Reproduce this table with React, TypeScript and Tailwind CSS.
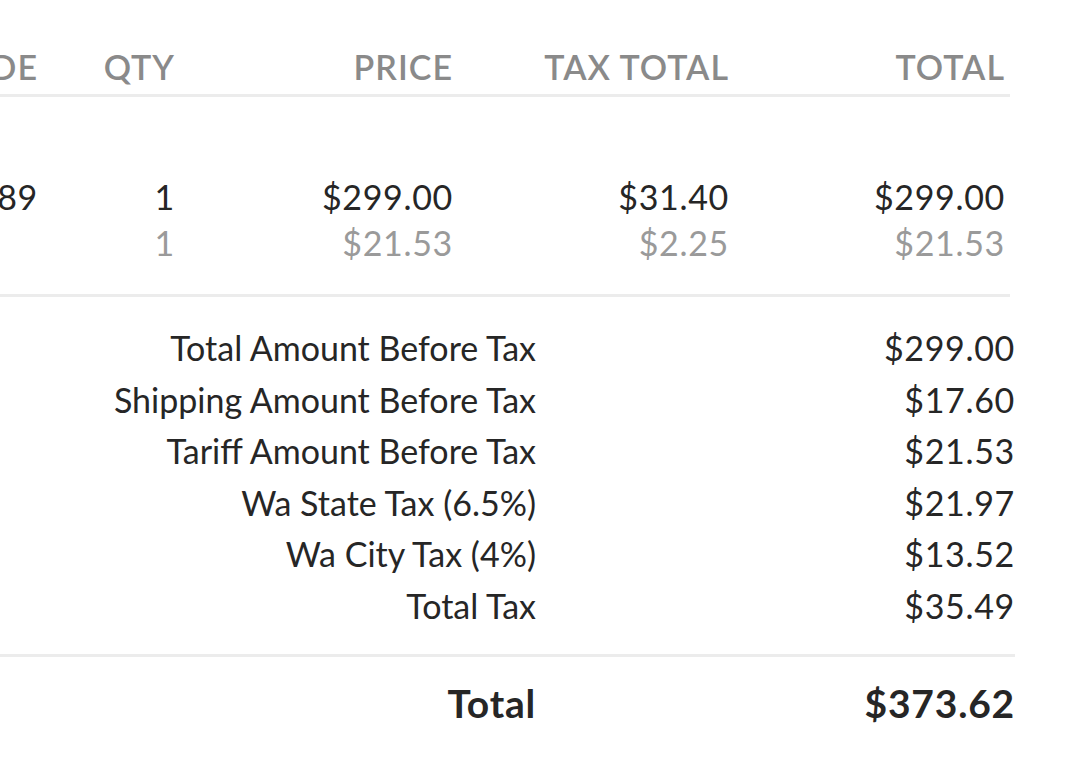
const lines = [
  { label: "Total Amount Before Tax", value: "$299.00" },
  { label: "Shipping Amount Before Tax", value: "$17.60" },
  { label: "Tariff Amount Before Tax", value: "$21.53" },
  { label: "Wa State Tax (6.5%)", value: "$21.97" },
  { label: "Wa City Tax (4%)", value: "$13.52" },
  { label: "Total Tax", value: "$35.49" },
];

const Clip = ({ text }: { text: string }) => (
  <div className="w-[38px] overflow-hidden flex justify-end">
    <span className="whitespace-nowrap">{text}</span>
  </div>
);

const App = () => {
  return (
    <div
      className="w-[1079px] h-[775px] bg-white overflow-hidden text-[34px] text-[#262626]"
      style={{ fontFamily: "Lato, 'Open Sans', sans-serif" }}
    >
      <div className="w-[1010px]">
        {/* header */}
        <div className="h-[94px] flex items-end pb-[7px] font-semibold text-[#8a8a8a] leading-[40px] tracking-[0.03em]">
          <Clip text="HS CODE" />
          <div className="w-[137px] text-right">QTY</div>
          <div className="w-[278px] text-right">PRICE</div>
          <div className="w-[276px] text-right">TAX TOTAL</div>
          <div className="w-[276px] text-right">TOTAL</div>
        </div>
        <div className="h-[3px] bg-[#ececec]" />

        {/* item */}
        <div className="pt-[77px] pb-[28px] leading-[46px] tracking-[0.02em]">
          <div className="flex">
            <Clip text="8471300189" />
            <div className="w-[137px] text-right">1</div>
            <div className="w-[278px] text-right">$299.00</div>
            <div className="w-[276px] text-right">$31.40</div>
            <div className="w-[276px] text-right">$299.00</div>
          </div>
          <div className="flex text-[#9a9a9a]">
            <div className="w-[38px]" />
            <div className="w-[137px] text-right">1</div>
            <div className="w-[278px] text-right">$21.53</div>
            <div className="w-[276px] text-right">$2.25</div>
            <div className="w-[276px] text-right">$21.53</div>
          </div>
        </div>
        <div className="h-[3px] bg-[#ececec]" />
      </div>

      {/* summary */}
      <div className="w-[1015px]">
        <div className="pt-[25px] pb-[22px] leading-[51.6px]">
          {lines.map((l) => (
            <div key={l.label} className="flex">
              <div className="w-[536px] text-right">{l.label}</div>
              <div className="flex-1 text-right tracking-[0.02em]">{l.value}</div>
            </div>
          ))}
        </div>
        <div className="h-[3px] bg-[#ececec]" />
        <div className="pt-[21px] flex leading-[50px] text-[39px] font-bold tracking-[0.02em]">
          <div className="w-[536px] text-right">Total</div>
          <div className="flex-1 text-right">$373.62</div>
        </div>
      </div>
    </div>
  );
};

export default App;
